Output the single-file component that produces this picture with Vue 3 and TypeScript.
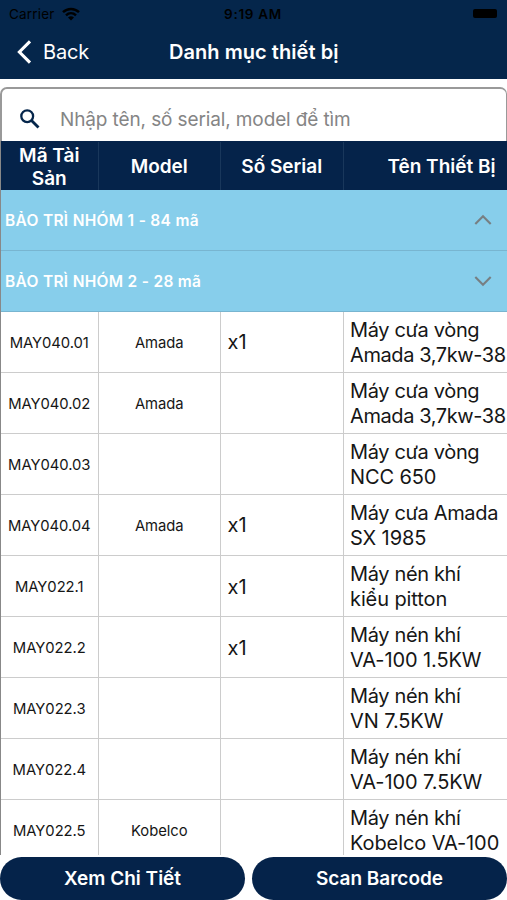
<script setup lang="ts">
interface Device {
  code: string
  model?: string
  serial?: string
  name: [string, string]
}

interface Group {
  title: string
  open: boolean
}

const groups: Group[] = [
  { title: 'BẢO TRÌ NHÓM 1 - 84 mã', open: false },
  { title: 'BẢO TRÌ NHÓM 2 - 28 mã', open: true },
]

const devices: Device[] = [
  { code: 'MAY040.01', model: 'Amada', serial: 'x1', name: ['Máy cưa vòng', 'Amada 3,7kw-38'] },
  { code: 'MAY040.02', model: 'Amada', name: ['Máy cưa vòng', 'Amada 3,7kw-38'] },
  { code: 'MAY040.03', name: ['Máy cưa vòng', 'NCC 650'] },
  { code: 'MAY040.04', model: 'Amada', serial: 'x1', name: ['Máy cưa Amada', 'SX 1985'] },
  { code: 'MAY022.1', serial: 'x1', name: ['Máy nén khí', 'kiểu pitton'] },
  { code: 'MAY022.2', serial: 'x1', name: ['Máy nén khí', 'VA-100 1.5KW'] },
  { code: 'MAY022.3', name: ['Máy nén khí', 'VN 7.5KW'] },
  { code: 'MAY022.4', name: ['Máy nén khí', 'VA-100 7.5KW'] },
  { code: 'MAY022.5', model: 'Kobelco', name: ['Máy nén khí', 'Kobelco VA-100'] },
]
</script>

<template>
  <main class="screen">
    <header class="top">
      <div class="status">
        <div class="carrier">
          <span>Carrier</span>
          <svg width="18" height="14" viewBox="0 0 18 14" fill="none" stroke="#000" stroke-width="2.5">
            <path d="M1 5.2C5.6.8 12.4.8 17 5.2" />
            <path d="M4 8.3C6.9 5.6 11.1 5.6 14 8.3" />
            <path d="M9 13.5 6 10.4Q9 7.9 12 10.4Z" fill="#000" stroke="none" />
          </svg>
        </div>
        <span class="clock">9:19 AM</span>
        <span class="battery"></span>
      </div>
      <nav class="nav">
        <a class="back">
          <svg width="16" height="24" viewBox="0 0 16 24" fill="none" stroke="#fff" stroke-width="3.1">
            <path d="M14 1.300 3.400 12 14 22.700" />
          </svg>
          <span>Back</span>
        </a>
        <h1>Danh mục thiết bị</h1>
      </nav>
    </header>

    <section class="search">
      <svg width="20" height="20" viewBox="0 0 20 20" fill="none" stroke="#05264b">
        <circle cx="7.200" cy="7.200" r="5.900" stroke-width="2.300" />
        <path d="m11.500 11.500 7 7" stroke-width="2.800" />
      </svg>
      <span>Nhập tên, số serial, model để tìm</span>
    </section>

    <section class="table">
      <div class="row head">
        <div class="cell">Mã Tài<br />Sản</div>
        <div class="cell">Model</div>
        <div class="cell">Số Serial</div>
        <div class="cell">Tên Thiết Bị</div>
      </div>
      <div v-for="g in groups" :key="g.title" class="group">
        <span>{{ g.title }}</span>
        <svg width="18" height="12" viewBox="0 0 18 12" fill="none" stroke="#777f83" stroke-width="2.100">
          <path :d="g.open ? 'M1.300 2 9 9.800 16.700 2' : 'M1.300 10 9 2.200 16.700 10'" />
        </svg>
      </div>
      <div v-for="d in devices" :key="d.code" class="row item">
        <div class="cell small">{{ d.code }}</div>
        <div class="cell small">{{ d.model }}</div>
        <div class="cell text">{{ d.serial }}</div>
        <div class="cell text name">
          <span class="kind">{{ d.name[0] }}</span>
          <span class="type" :class="{ tight: d.name[1].includes('kw') }">{{ d.name[1] }}</span>
        </div>
      </div>
    </section>

    <footer class="actions">
      <button>Xem Chi Tiết</button>
      <button>Scan Barcode</button>
    </footer>
  </main>
</template>

<style>
body {
  margin: 0;
}
</style>

<style scoped>
* {
  box-sizing: border-box;
}
.screen {
  width: 507px;
  height: 900px;
  display: flex;
  flex-direction: column;
  overflow: hidden;
  background: #fff;
  font-family: Inter, "Liberation Sans", sans-serif;
  color: #161616;
}
.top {
  height: 79px;
  flex: none;
  background: #05264b;
}
.status {
  height: 27px;
  padding: 0 10px 0 9px;
  display: grid;
  grid-template-columns: 1fr auto 1fr;
  align-items: center;
  font-size: 13.5px;
  color: #000;
}
.carrier {
  display: flex;
  align-items: center;
  gap: 7px;
  letter-spacing: 0.2px;
}
.clock {
  font-weight: 600;
  letter-spacing: 0.7px;
}
.battery {
  justify-self: end;
  width: 24px;
  height: 9px;
  border-radius: 2px;
  background: #000;
}
.nav {
  height: 50px;
  padding-left: 16px;
  display: grid;
  grid-template-columns: 153px 1fr;
  align-items: center;
  color: #fff;
}
.back {
  display: flex;
  align-items: center;
  gap: 11px;
  font-size: 20px;
  letter-spacing: -0.15px;
}
h1 {
  margin: 0;
  font-size: 20px;
  font-weight: 600;
  letter-spacing: 0.05px;
  white-space: nowrap;
}
.search {
  height: 54px;
  flex: none;
  margin-top: 8px;
  padding: 8px 0 0 18px;
  display: flex;
  align-items: center;
  gap: 20px;
  border: 2px solid #999;
  border-right-width: 1px;
  border-bottom: 0;
  border-radius: 7px 7px 0 0;
  font-size: 19px;
  letter-spacing: -0.12px;
  color: #858585;
}
.search svg {
  margin-bottom: 1px;
}
.table {
  height: 714px;
  flex: none;
  overflow: hidden;
  border-left: 1px solid #888;
}
.row {
  display: grid;
  grid-template-columns: 97.500px 122.500px 122.500px 164.500px;
}
.cell {
  display: flex;
  align-items: center;
  justify-content: center;
  text-align: center;
  border-right: 1px solid #ccc;
  white-space: nowrap;
}
.cell:last-child {
  border-right: 0;
}
.head {
  height: 49px;
  padding-top: 1px;
  background: #05234a;
  color: #fff;
  font-size: 19px;
  font-weight: 600;
  line-height: 23px;
}
.head .cell {
  padding-top: 1px;
  border-color: #19375b;
}
.head .cell:last-child {
  justify-content: flex-end;
  padding-right: 12.500px;
}
.group {
  height: 60.800px;
  padding: 0 15px 0 4px;
  display: flex;
  align-items: center;
  justify-content: space-between;
  background: #87ceeb;
  border-bottom: 1px solid #78b5d0;
  color: #fff;
  font-size: 15.500px;
  font-weight: 600;
  letter-spacing: 0.3px;
}
.group span {
  padding-top: 2px;
}
.item {
  height: 61.100px;
  border-bottom: 1px solid #ccc;
}
.small {
  padding-top: 2px;
  font-size: 14.800px;
  letter-spacing: -0.05px;
}
.text {
  justify-content: flex-start;
  text-align: left;
  padding: 2px 0 0 6.500px;
  font-size: 20px;
  line-height: 25px;
}
.name {
  flex-direction: column;
  align-items: flex-start;
  justify-content: center;
}
.kind {
  letter-spacing: -0.35px;
}
.type {
  letter-spacing: -0.1px;
}
.tight {
  letter-spacing: -0.4px;
}
.actions {
  flex: 1;
  padding-top: 2px;
  display: grid;
  grid-template-columns: 245px 255px;
  gap: 7px;
}
button {
  border: 0;
  padding: 0;
  border-radius: 22px;
  background: #05234a;
  color: #fff;
  font: 600 19px Inter, sans-serif;
}
</style>
